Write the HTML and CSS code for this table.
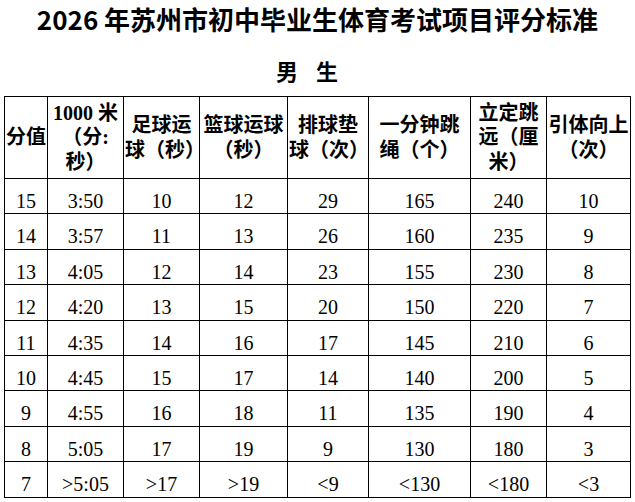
FILE: index.html
```html
<!DOCTYPE html>
<html lang="zh-CN">
<head>
<meta charset="utf-8">
<title>2026 年苏州市初中毕业生体育考试项目评分标准</title>
<link rel="stylesheet" href="styles.css">
</head>
<body>
<h1 class="title">2026 年苏州市初中毕业生体育考试项目评分标准</h1>
<h2 class="subtitle"><span>男</span><span>生</span></h2>
<table class="score">
  <colgroup>
    <col class="c1"><col class="c2"><col class="c3"><col class="c4">
    <col class="c5"><col class="c6"><col class="c7"><col class="c8">
  </colgroup>
  <thead>
    <tr class="head">
      <th>分值</th>
      <th>1000 米<br>（分:<br>秒）</th>
      <th>足球运<br>球（秒）</th>
      <th>篮球运球<br>（秒）</th>
      <th>排球垫<br>球（次）</th>
      <th>一分钟跳<br>绳（个）</th>
      <th>立定跳<br>远（厘<br>米）</th>
      <th>引体向上<br>（次）</th>
    </tr>
  </thead>
  <tbody>
    <tr class="row"><td>15</td><td>3:50</td><td>10</td><td>12</td><td>29</td><td>165</td><td>240</td><td>10</td></tr>
    <tr class="row"><td>14</td><td>3:57</td><td>11</td><td>13</td><td>26</td><td>160</td><td>235</td><td>9</td></tr>
    <tr class="row"><td>13</td><td>4:05</td><td>12</td><td>14</td><td>23</td><td>155</td><td>230</td><td>8</td></tr>
    <tr class="row"><td>12</td><td>4:20</td><td>13</td><td>15</td><td>20</td><td>150</td><td>220</td><td>7</td></tr>
    <tr class="row"><td>11</td><td>4:35</td><td>14</td><td>16</td><td>17</td><td>145</td><td>210</td><td>6</td></tr>
    <tr class="row"><td>10</td><td>4:45</td><td>15</td><td>17</td><td>14</td><td>140</td><td>200</td><td>5</td></tr>
    <tr class="row"><td>9</td><td>4:55</td><td>16</td><td>18</td><td>11</td><td>135</td><td>190</td><td>4</td></tr>
    <tr class="row"><td>8</td><td>5:05</td><td>17</td><td>19</td><td>9</td><td>130</td><td>180</td><td>3</td></tr>
    <tr class="row"><td>7</td><td>&gt;5:05</td><td>&gt;17</td><td>&gt;19</td><td>&lt;9</td><td>&lt;130</td><td>&lt;180</td><td>&lt;3</td></tr>
  </tbody>
</table>
</body>
</html>
```
FILE: styles.css
```css
html, body {
  margin: 0;
  padding: 0;
  background: #fff;
  color: #000;
}

.title {
  margin: 0;
  font-family: "Noto Sans CJK SC", sans-serif;
  font-weight: bold;
  font-size: 26px;
  line-height: 38px;
  text-align: center;
}

.subtitle {
  margin: 17px 0 0;
  padding-right: 21px;
  display: flex;
  justify-content: center;
  gap: 18px;
  font-family: "Noto Sans CJK SC", sans-serif;
  font-weight: bold;
  font-size: 22px;
  line-height: 30px;
}

.score {
  margin: 11px 0 0 4px;
  width: 627px;
  table-layout: fixed;
  border-collapse: separate;
  border-spacing: 0;
  border-left: 1px solid #000;
  border-top: 1px solid #000;
}

.c1 { width: 43px; }
.c2 { width: 76px; }
.c3 { width: 76px; }
.c4 { width: 88px; }
.c5 { width: 81px; }
.c6 { width: 102px; }
.c7 { width: 76px; }
.c8 { width: 84px; }

.score th,
.score td {
  border-right: 1px solid #000;
  border-bottom: 1px solid #000;
  text-align: center;
  white-space: nowrap;
}

.head {
  height: 82px;
}

.score th {
  padding: 0 1px;
  vertical-align: middle;
  font-family: "Liberation Serif", "Noto Sans CJK SC", serif;
  font-weight: bold;
  font-size: 20px;
  line-height: 24.5px;
}

.row {
  height: 35.4px;
}

.score td {
  padding: 11px 1px 0;
  vertical-align: top;
  font-family: "Liberation Serif", serif;
  font-size: 20px;
  line-height: 23px;
}
```
